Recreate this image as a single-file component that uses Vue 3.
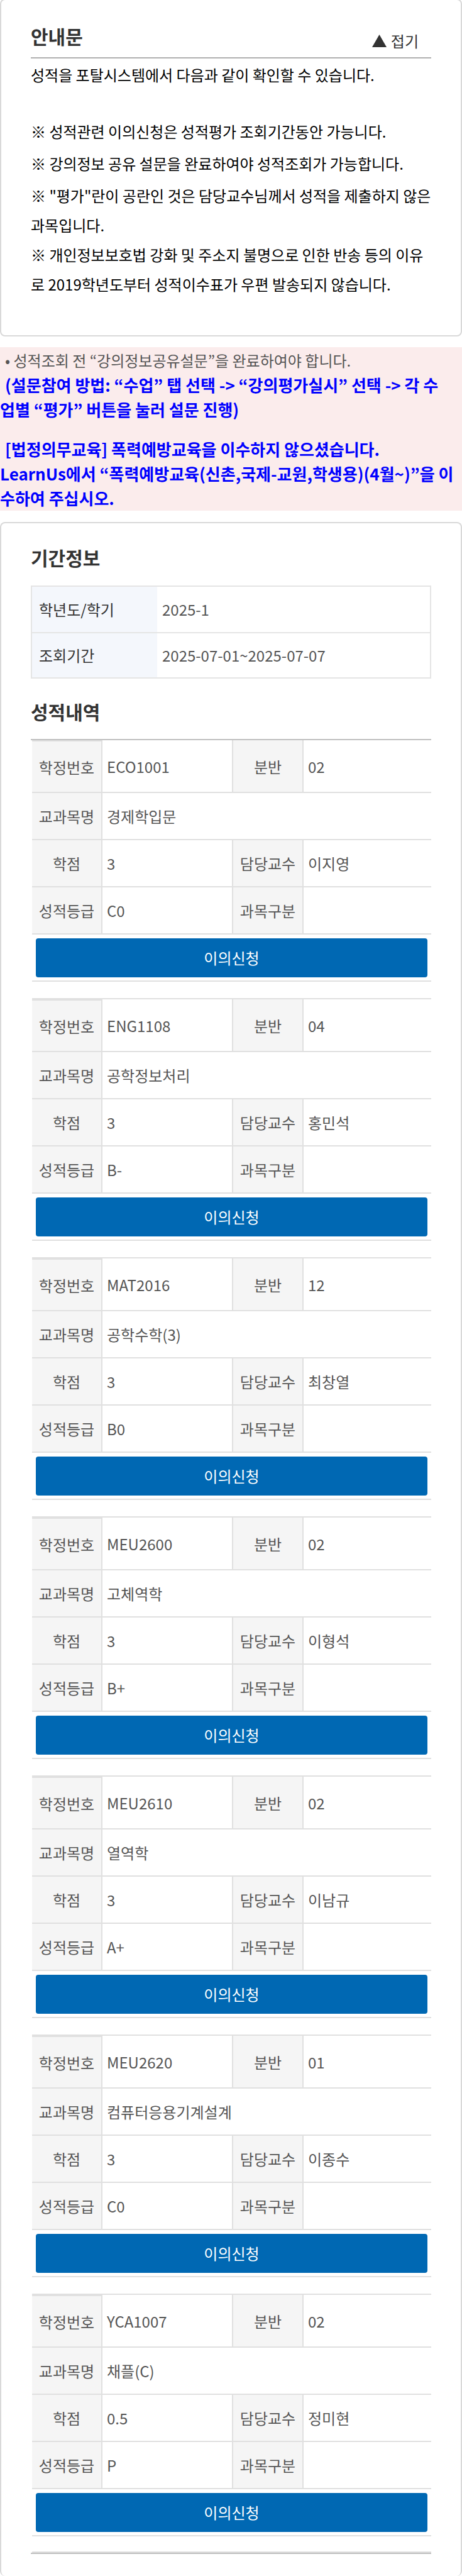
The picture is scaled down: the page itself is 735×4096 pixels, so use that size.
<script setup>
import { ref } from 'vue'

const open = ref(true)

const courses = [
  { code: 'ECO1001', section: '02', name: '경제학입문', credit: '3', professor: '이지영', grade: 'C0' },
  { code: 'ENG1108', section: '04', name: '공학정보처리', credit: '3', professor: '홍민석', grade: 'B-' },
  { code: 'MAT2016', section: '12', name: '공학수학(3)', credit: '3', professor: '최창열', grade: 'B0' },
  { code: 'MEU2600', section: '02', name: '고체역학', credit: '3', professor: '이형석', grade: 'B+' },
  { code: 'MEU2610', section: '02', name: '열역학', credit: '3', professor: '이남규', grade: 'A+' },
  { code: 'MEU2620', section: '01', name: '컴퓨터응용기계설계', credit: '3', professor: '이종수', grade: 'C0' },
  { code: 'YCA1007', section: '02', name: '채플(C)', credit: '0.5', professor: '정미현', grade: 'P' },
]
</script>

<template>
  <main class="page">
    <section class="card notice">
      <header class="notice-head">
        <h2>안내문</h2>
        <button type="button" class="toggle" :aria-expanded="open" @click="open = !open">
          <svg viewBox="0 0 23 20" width="23" height="20" aria-hidden="true">
            <path d="M11.5 0 L23 20 H0 Z" fill="#333" />
          </svg>
          <span>접기</span>
        </button>
      </header>
      <div v-show="open" class="notice-body">
        <p class="lead">성적을 포탈시스템에서 다음과 같이 확인할 수 있습니다.</p>
        <p>※ 성적관련 이의신청은 성적평가 조회기간동안 가능니다.</p>
        <p>※ 강의정보 공유 설문을 완료하여야 성적조회가 가능합니다.</p>
        <p>
          ※ "평가"란이 공란인 것은 담당교수님께서 성적을 제출하지 않은<br />과목입니다.<br />
          ※ 개인정보보호법 강화 및 주소지 불명으로 인한 반송 등의 이유<br />로 2019학년도부터 성적이수표가 우편 발송되지 않습니다.
        </p>
      </div>
    </section>

    <section class="alert">
      <p class="plain indent">• 성적조회 전 “강의정보공유설문”을 완료하여야 합니다.</p>
      <p class="indent">(설문참여 방법: “수업” 탭 선택 -&gt; “강의평가실시” 선택 -&gt; 각 수<br />업별 “평가” 버튼을 눌러 설문 진행)</p>
      <p class="indent next">[법정의무교육] 폭력예방교육을 이수하지 않으셨습니다.<br />LearnUs에서 “폭력예방교육(신촌,국제-교원,학생용)(4월~)”을 이<br />수하여 주십시오.</p>
    </section>

    <section class="card grades">
      <h2>기간정보</h2>
      <table class="period">
        <tbody>
          <tr>
            <th scope="row">학년도/학기</th>
            <td>2025-1</td>
          </tr>
          <tr>
            <th scope="row">조회기간</th>
            <td>2025-07-01~2025-07-07</td>
          </tr>
        </tbody>
      </table>

      <h2>성적내역</h2>
      <div class="list">
        <table v-for="c in courses" :key="c.code" class="course">
          <colgroup>
            <col class="label-col" />
            <col class="wide-col" />
            <col class="label-col" />
            <col />
          </colgroup>
          <tbody>
            <tr class="first">
              <th scope="row">학정번호</th>
              <td>{{ c.code }}</td>
              <th scope="row">분반</th>
              <td>{{ c.section }}</td>
            </tr>
            <tr>
              <th scope="row">교과목명</th>
              <td colspan="3">{{ c.name }}</td>
            </tr>
            <tr>
              <th scope="row">학점</th>
              <td>{{ c.credit }}</td>
              <th scope="row">담당교수</th>
              <td>{{ c.professor }}</td>
            </tr>
            <tr>
              <th scope="row">성적등급</th>
              <td>{{ c.grade }}</td>
              <th scope="row">과목구분</th>
              <td></td>
            </tr>
            <tr>
              <td colspan="4" class="action">
                <button type="button">이의신청</button>
              </td>
            </tr>
          </tbody>
        </table>
      </div>
    </section>
  </main>
</template>

<style>
body {
  margin: 0;
  background: #fff;
}
</style>

<style scoped>
.page {
  font-family: "Noto Sans CJK KR", sans-serif;
  font-size: 24px;
  line-height: 36px;
  color: #555;
  overflow: hidden;
}
h2,
p {
  margin: 0;
}
h2 {
  font-size: 30px;
  line-height: 44px;
  font-weight: 700;
  color: #333;
}
button {
  font: inherit;
  border: 0;
  cursor: pointer;
}
.card {
  border: 2px solid #d9d9d9;
  border-radius: 8px;
  padding: 0 47px;
  background: #fff;
}

.notice {
  margin-top: -2px;
  padding-bottom: 58px;
}
.notice-head {
  display: flex;
  justify-content: space-between;
  align-items: flex-end;
  height: 91px;
  border-bottom: 2px solid #b0b0b0;
}
.notice-head h2 {
  padding-bottom: 12px;
}
.toggle {
  display: flex;
  align-items: center;
  gap: 7px;
  padding: 0 20px 8px 0;
  background: none;
  color: #333;
}
.notice-body {
  padding-top: 2px;
  color: #000;
  line-height: 47px;
  white-space: nowrap;
}
.notice-body p + p {
  margin-top: 4px;
}
.notice-body .lead + p {
  margin-top: 43px;
}

.alert {
  margin-top: 17px;
  padding: 1px 0;
  background: #fbecec;
  color: #00f;
  font-size: 26px;
  font-weight: 700;
  line-height: 39px;
  white-space: nowrap;
}
.alert .plain {
  color: #555;
  font-size: 24px;
  font-weight: 400;
}
.indent {
  text-indent: 8px;
}
.next {
  margin-top: 24px;
}

.grades {
  margin-top: 18px;
  padding-top: 32px;
  padding-bottom: 35px;
  border-bottom: 0;
}
table {
  width: 100%;
  border-collapse: separate;
  border-spacing: 0;
}
th,
td {
  box-sizing: border-box;
  padding: 0;
  text-align: left;
  font-weight: 400;
}

.period {
  margin: 23px 0 30px;
  border: 2px solid #e5e5e5;
}
.period th,
.period td {
  height: 72px;
}
.period th {
  width: 199px;
  padding-left: 11px;
  background: #f4f7fc;
  color: #333;
}
.period td {
  padding-left: 8px;
}
.period tr + tr th,
.period tr + tr td {
  border-top: 2px solid #e5e5e5;
}

.list {
  margin-top: 22px;
  padding-left: 2px;
  border-top: 2px solid #c0c0c0;
  border-bottom: 2px solid #c0c0c0;
}
.list::after {
  content: "";
  display: block;
  margin-top: 24px;
  border-top: 2px solid #e0e0e0;
}
.course {
  table-layout: fixed;
}
.course + .course {
  margin-top: 26px;
  border-top: 2px solid #e0e0e0;
}
.label-col {
  width: 112px;
}
.wide-col {
  width: 208px;
}
.course th,
.course td {
  height: 75px;
  border-bottom: 2px solid #e0e0e0;
}
.course th {
  background: #f5f5f5;
  border-right: 2px solid #e0e0e0;
  text-align: center;
}
.course td {
  padding-left: 7px;
}
.course td:not(:last-child) {
  border-right: 2px solid #e0e0e0;
}
.course .first th,
.course .first td {
  height: 84px;
  padding-top: 2px;
}
.course .first th:first-child {
  border-top: 2px solid #e0e0e0;
}
.course .action {
  padding: 0 6px;
}
.action button {
  display: block;
  width: 100%;
  height: 62px;
  border-radius: 4px;
  background: #0068b3;
  color: #fff;
}
</style>
